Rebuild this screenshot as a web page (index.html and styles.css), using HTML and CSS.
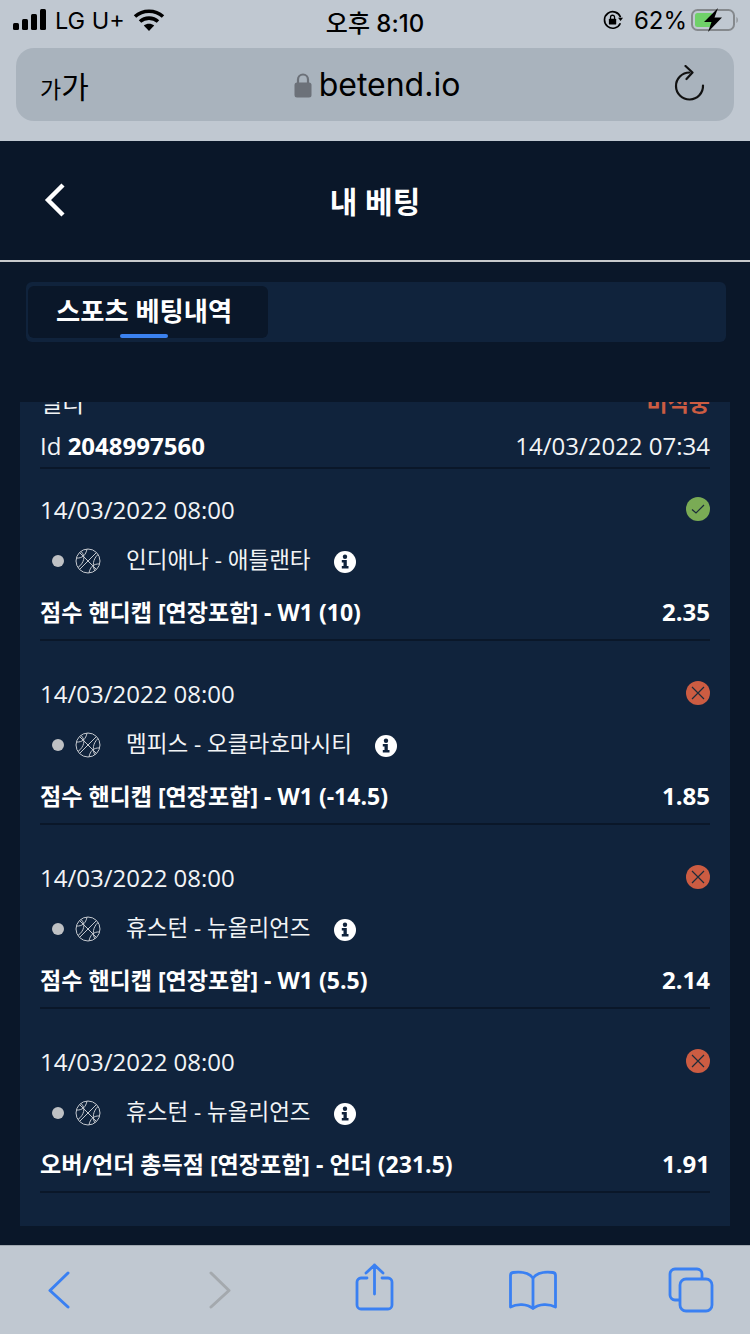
FILE: index.html
```html
<!DOCTYPE html>
<html>
<head>
    <title>내 베팅</title>
    <meta charset="UTF-8">
    <meta name="viewport" content="width=device-width, initial-scale=1.0">
    <link rel="stylesheet" href="styles.css">
</head>
<body>
    <div class="browser-top">
        <div class="status-bar">
            <div class="status-left">
                <svg class="signal" width="34" height="22" viewBox="0 0 34 22" fill="#000">
                    <rect x="0" y="14" width="6" height="7" rx="1.5"/>
                    <rect x="9" y="10" width="6" height="11" rx="1.5"/>
                    <rect x="18" y="5" width="6" height="16" rx="1.5"/>
                    <rect x="27" y="0" width="6" height="21" rx="1.5"/>
                </svg>
                <span class="carrier">LG U+</span>
                <svg class="wifi" width="32" height="24" viewBox="0 0 32 24" fill="none" stroke="#000" stroke-width="3.6">
                    <path d="M2 8.500C9.800 1.500 22.200 1.500 30 8.500"/>
                    <path d="M7 13.500C12 9 20 9 25 13.500"/>
                    <path d="M16 23L10.800 17.600C13.800 15.200 18.200 15.200 21.200 17.600Z" fill="#000" stroke="none"/>
                </svg>
            </div>
            <div class="status-time">오후 8:10</div>
            <div class="status-right">
                <svg width="22" height="22" viewBox="0 0 24 24" fill="none" stroke="#000" stroke-width="1.800">
                    <path d="M20 15.500A9 9 0 1 1 20.200 9"/>
                    <path d="M17.500 9.500H23L20.200 13Z" fill="#000" stroke="none"/>
                    <rect x="7.500" y="10.500" width="8" height="6.500" rx="1" fill="#000" stroke="none"/>
                    <path d="M9.300 11V9a2.200 2.200 0 0 1 4.400 0v2" stroke-width="1.400"/>
                </svg>
                <span class="battery-pct">62%</span>
                <svg width="48" height="24" viewBox="0 0 48 24">
                    <rect x="1" y="2" width="42" height="20" rx="5.500" fill="none" stroke="#85898d" stroke-width="2"/>
                    <rect x="4" y="5" width="18" height="14" rx="2.500" fill="#6fd169"/>
                    <path d="M45.500 9c1.600.6 1.600 5.400 0 6z" fill="#85898d"/>
                    <path d="M27 0L13 14H20.500L17 24L31 9.500H23.500Z" fill="#000"/>
                </svg>
            </div>
        </div>
        <div class="address-bar">
            <span class="text-size"><small>가</small>가</span>
            <div class="url">
                <svg width="18" height="26" viewBox="0 0 18 26">
                    <path d="M4 12V7.500a5 5 0 0 1 10 0V12" fill="none" stroke="#6c7179" stroke-width="2.200"/>
                    <rect x="0.500" y="10.500" width="17" height="15" rx="2.500" fill="#6c7179"/>
                </svg>
                <span>betend.io</span>
            </div>
            <svg class="reload" width="32" height="38" viewBox="0 0 32 38" fill="none" stroke="#111" stroke-width="2.200" stroke-linecap="round" stroke-linejoin="round">
                <path d="M29 20.500A13.500 13.500 0 1 1 15.500 7.500"/>
                <path d="M11.500 1L18.500 7.500L12.500 14"/>
            </svg>
        </div>
    </div>

    <div class="app">
        <div class="app-header">
            <svg class="back" width="22" height="34" viewBox="0 0 22 34" fill="none" stroke="#fff" stroke-width="4.400">
                <path d="M19 2L4 17L19 32"/>
            </svg>
            <h1>내 베팅</h1>
        </div>

        <div class="tabs">
            <div class="tab active">스포츠 베팅내역</div>
        </div>

        <div class="card">
            <div class="card-head">
                <div class="row">
                    <span>멀티</span>
                    <span class="lost-text">미적중</span>
                </div>
                <div class="row">
                    <span>Id <strong>2048997560</strong></span>
                    <span>14/03/2022 07:34</span>
                </div>
            </div>

            <div class="bet">
                <div class="row">
                    <span>14/03/2022 08:00</span>
                    <svg class="result" width="24" height="24" viewBox="0 0 24 24" fill="none" stroke="#1c2c3a" stroke-width="1.200">
                        <circle cx="12" cy="12" r="12" fill="#7aab55" stroke="none"/>
                        <path d="M6 12.500L10 16L18 8"/>
                    </svg>
                </div>
                <div class="match">
                    <i class="dot"></i>
                    <svg class="ball" width="26" height="26" viewBox="0 0 26 26" fill="none" stroke="#c4c8ce" stroke-width="1">
                        <circle cx="13" cy="13" r="12"/>
                        <path d="M4.500 4.500L21.500 21.500M21.500 4.500L4.500 21.500M1.500 10C7 10.500 11 7 12 1M14 25C15 19 19 15.500 24.500 16M6 3.500C11 8 9 15 3 19.500M23 6.500C18 11 17 18 20 23"/>
                    </svg>
                    <span class="teams">인디애나 - 애틀랜타</span>
                    <svg class="info" width="22" height="22" viewBox="0 0 22 22">
                        <circle cx="11" cy="11" r="11" fill="#fff"/>
                        <circle cx="11" cy="5.800" r="2.200" fill="#10233c"/>
                        <path d="M7.800 9H12.800V15H14.500V17.500H7.800V15H9.500V11.500H7.800Z" fill="#10233c"/>
                    </svg>
                </div>
                <div class="row market">
                    <span>점수 핸디캡 [연장포함] - W1 (10)</span>
                    <span>2.35</span>
                </div>
            </div>

            <div class="bet">
                <div class="row">
                    <span>14/03/2022 08:00</span>
                    <svg class="result" width="24" height="24" viewBox="0 0 24 24" fill="none" stroke="#1c2c3a" stroke-width="1.200">
                        <circle cx="12" cy="12" r="12" fill="#cc5c42" stroke="none"/>
                        <path d="M6 6L18 18M18 6L6 18"/>
                    </svg>
                </div>
                <div class="match">
                    <i class="dot"></i>
                    <svg class="ball" width="26" height="26" viewBox="0 0 26 26" fill="none" stroke="#c4c8ce" stroke-width="1">
                        <circle cx="13" cy="13" r="12"/>
                        <path d="M4.500 4.500L21.500 21.500M21.500 4.500L4.500 21.500M1.500 10C7 10.500 11 7 12 1M14 25C15 19 19 15.500 24.500 16M6 3.500C11 8 9 15 3 19.500M23 6.500C18 11 17 18 20 23"/>
                    </svg>
                    <span class="teams">멤피스 - 오클라호마시티</span>
                    <svg class="info" width="22" height="22" viewBox="0 0 22 22">
                        <circle cx="11" cy="11" r="11" fill="#fff"/>
                        <circle cx="11" cy="5.800" r="2.200" fill="#10233c"/>
                        <path d="M7.800 9H12.800V15H14.500V17.500H7.800V15H9.500V11.500H7.800Z" fill="#10233c"/>
                    </svg>
                </div>
                <div class="row market">
                    <span>점수 핸디캡 [연장포함] - W1 (-14.5)</span>
                    <span>1.85</span>
                </div>
            </div>

            <div class="bet">
                <div class="row">
                    <span>14/03/2022 08:00</span>
                    <svg class="result" width="24" height="24" viewBox="0 0 24 24" fill="none" stroke="#1c2c3a" stroke-width="1.200">
                        <circle cx="12" cy="12" r="12" fill="#cc5c42" stroke="none"/>
                        <path d="M6 6L18 18M18 6L6 18"/>
                    </svg>
                </div>
                <div class="match">
                    <i class="dot"></i>
                    <svg class="ball" width="26" height="26" viewBox="0 0 26 26" fill="none" stroke="#c4c8ce" stroke-width="1">
                        <circle cx="13" cy="13" r="12"/>
                        <path d="M4.500 4.500L21.500 21.500M21.500 4.500L4.500 21.500M1.500 10C7 10.500 11 7 12 1M14 25C15 19 19 15.500 24.500 16M6 3.500C11 8 9 15 3 19.500M23 6.500C18 11 17 18 20 23"/>
                    </svg>
                    <span class="teams">휴스턴 - 뉴올리언즈</span>
                    <svg class="info" width="22" height="22" viewBox="0 0 22 22">
                        <circle cx="11" cy="11" r="11" fill="#fff"/>
                        <circle cx="11" cy="5.800" r="2.200" fill="#10233c"/>
                        <path d="M7.800 9H12.800V15H14.500V17.500H7.800V15H9.500V11.500H7.800Z" fill="#10233c"/>
                    </svg>
                </div>
                <div class="row market">
                    <span>점수 핸디캡 [연장포함] - W1 (5.5)</span>
                    <span>2.14</span>
                </div>
            </div>

            <div class="bet">
                <div class="row">
                    <span>14/03/2022 08:00</span>
                    <svg class="result" width="24" height="24" viewBox="0 0 24 24" fill="none" stroke="#1c2c3a" stroke-width="1.200">
                        <circle cx="12" cy="12" r="12" fill="#cc5c42" stroke="none"/>
                        <path d="M6 6L18 18M18 6L6 18"/>
                    </svg>
                </div>
                <div class="match">
                    <i class="dot"></i>
                    <svg class="ball" width="26" height="26" viewBox="0 0 26 26" fill="none" stroke="#c4c8ce" stroke-width="1">
                        <circle cx="13" cy="13" r="12"/>
                        <path d="M4.500 4.500L21.500 21.500M21.500 4.500L4.500 21.500M1.500 10C7 10.500 11 7 12 1M14 25C15 19 19 15.500 24.500 16M6 3.500C11 8 9 15 3 19.500M23 6.500C18 11 17 18 20 23"/>
                    </svg>
                    <span class="teams">휴스턴 - 뉴올리언즈</span>
                    <svg class="info" width="22" height="22" viewBox="0 0 22 22">
                        <circle cx="11" cy="11" r="11" fill="#fff"/>
                        <circle cx="11" cy="5.800" r="2.200" fill="#10233c"/>
                        <path d="M7.800 9H12.800V15H14.500V17.500H7.800V15H9.500V11.500H7.800Z" fill="#10233c"/>
                    </svg>
                </div>
                <div class="row market">
                    <span>오버/언더 총득점 [연장포함] - 언더 (231.5)</span>
                    <span>1.91</span>
                </div>
            </div>
        </div>
    </div>

    <div class="browser-bottom">
        <svg width="26" height="38" viewBox="0 0 26 38" fill="none" stroke="#3a80f2" stroke-width="3" stroke-linecap="round" stroke-linejoin="round">
            <path d="M22 2L4 19.500L22 36"/>
        </svg>
        <svg class="forward" width="26" height="38" viewBox="0 0 26 38" fill="none" stroke="#a4a9ae" stroke-width="3" stroke-linecap="round" stroke-linejoin="round">
            <path d="M4 2L22 19.500L4 36"/>
        </svg>
        <svg class="share" width="40" height="48" viewBox="0 0 40 48" fill="none" stroke="#3a80f2" stroke-width="2.800" stroke-linecap="round" stroke-linejoin="round">
            <path d="M12 15H6a4 4 0 0 0-4 4V42a4 4 0 0 0 4 4H33a4 4 0 0 0 4-4V19a4 4 0 0 0-4-4H27"/>
            <path d="M19.500 31V2M11 10L19.500 2L28 10"/>
        </svg>
        <svg width="48" height="40" viewBox="0 0 48 40" fill="none" stroke="#3a80f2" stroke-width="2.800" stroke-linecap="round" stroke-linejoin="round">
            <path d="M24 8C20 3 12 1.500 4 2.500C2.500 2.700 1.500 4 1.500 5.500V37C8 33.500 18 33.500 24 38.500C30 33.500 40 33.500 46.500 37V5.500C46.500 4 45.500 2.700 44 2.500C36 1.500 28 3 24 8Z"/>
            <path d="M24 8V38"/>
        </svg>
        <svg width="46" height="46" viewBox="0 0 46 46" fill="none" stroke="#3a80f2" stroke-width="2.800" stroke-linejoin="round">
            <path d="M11 33H7a5 5 0 0 1-5-5V7a5 5 0 0 1 5-5H29a5 5 0 0 1 5 5v4"/>
            <rect x="12" y="12" width="32" height="32" rx="6"/>
        </svg>
    </div>
</body>
</html>
```
FILE: styles.css
```css
body {
    margin: 0;
    width: 750px;
    height: 1334px;
    overflow: hidden;
    display: flex;
    flex-direction: column;
    font-family: 'Open Sans', 'Noto Sans CJK KR', sans-serif;
    background: #0a1729;
    color: #ffffff;
}

/* safari chrome */
.browser-top {
    height: 141px;
    flex: none;
    background: #c0c8d1;
    color: #000;
    font-family: Inter, 'Noto Sans CJK KR', sans-serif;
}

.status-bar {
    height: 40px;
    margin-bottom: 8px;
    display: flex;
    align-items: center;
    justify-content: space-between;
    padding: 0 11px 0 13px;
    position: relative;
    font-size: 24px;
}

.status-left {
    display: flex;
    align-items: center;
    gap: 8px;
}

.carrier {
    font-size: 23.5px;
}

.status-time {
    position: absolute;
    left: 0;
    right: 0;
    top: 4px;
    text-align: center;
    font-weight: 500;
    pointer-events: none;
}

.status-right {
    display: flex;
    align-items: center;
    gap: 6px;
}

.battery-pct {
    margin: 0 -2px 0 4px;
}

.address-bar {
    margin: 0 16px;
    height: 73px;
    background: #a9b3bd;
    border-radius: 18px;
    display: flex;
    align-items: center;
    justify-content: space-between;
    padding: 0 28px 0 24px;
    position: relative;
}

.text-size {
    font-size: 30px;
}

.text-size small {
    font-size: 23px;
}

.url {
    position: absolute;
    left: 4px;
    right: 0;
    display: flex;
    align-items: center;
    justify-content: center;
    gap: 7px;
    font-size: 32px;
    pointer-events: none;
}

.reload {
    margin-top: -2px;
}

/* app */
.app {
    flex: 1;
    min-height: 0;
    display: flex;
    flex-direction: column;
    padding-bottom: 19px;
}

.app-header {
    height: 119px;
    flex: none;
    border-bottom: 2px solid #c8cacc;
    display: flex;
    align-items: center;
    justify-content: center;
    position: relative;
}

.app-header h1 {
    margin: -2px 0 0;
    font-size: 30px;
    font-weight: 700;
}

.back {
    position: absolute;
    left: 44px;
    top: 42px;
}

.tabs {
    flex: none;
    height: 60px;
    margin: 20px 24px 60px 26px;
    background: #10233c;
    border-radius: 6px;
    padding: 4px 2px;
    box-sizing: border-box;
}

.tab {
    width: 240px;
    height: 52px;
    box-sizing: border-box;
    padding-left: 28px;
    background: #0a1729;
    border-radius: 6px;
    font-size: 26.3px;
    font-weight: 700;
    line-height: 50px;
    position: relative;
}

.tab.active::after {
    content: "";
    position: absolute;
    left: 92px;
    bottom: 0;
    width: 48px;
    height: 4px;
    border-radius: 2px;
    background: #3b82f0;
}

.card {
    flex: 1;
    min-height: 0;
    margin: 0 20px;
    padding: 0 20px;
    background: #10233c;
    overflow: hidden;
    font-size: 24px;
    color: #f2f4f6;
}

.row {
    display: flex;
    align-items: center;
    justify-content: space-between;
}

.card-head {
    margin-top: -23px;
    height: 88px;
    border-bottom: 2px solid #0a1729;
}

.card-head .row {
    height: 44px;
}

.card strong {
    color: #ffffff;
}

.lost-text {
    color: #cc5c42;
    font-weight: 700;
    font-size: 23px;
}

.bet {
    padding: 37px 0 11px;
    border-bottom: 2px solid #0a1729;
}

.bet:nth-child(2) {
    padding-top: 25px;
}

.bet > .row:first-child {
    height: 30px;
}

.match {
    height: 38px;
    margin-top: 18px;
    display: flex;
    align-items: center;
    padding-left: 12px;
}

.dot {
    width: 12px;
    height: 12px;
    border-radius: 50%;
    background: #bfc1c4;
    flex: none;
}

.ball {
    margin-left: 11px;
    flex: none;
}

.teams {
    margin: -6px 0 0 25px;
    font-size: 22.5px;
}

.info {
    margin: 2px 0 0 23px;
    flex: none;
}

.market {
    margin-top: 14px;
    height: 34px;
    font-weight: 700;
    color: #ffffff;
}

.market span:first-child {
    font-size: 23.05px;
}

.browser-bottom {
    height: 89px;
    flex: none;
    box-sizing: border-box;
    background: #c0c8d1;
    border-top: 1px solid #a0a8b0;
    display: grid;
    grid-template-columns: repeat(5, 158px);
    justify-content: center;
    justify-items: center;
    align-items: center;
}

.forward {
    margin-left: 6px;
}

.share {
    margin-bottom: 6px;
}
```
